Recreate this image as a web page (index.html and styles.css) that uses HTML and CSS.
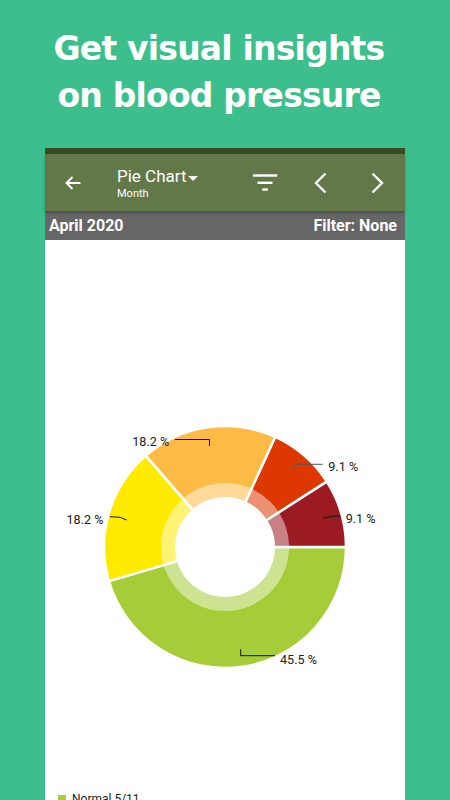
FILE: index.html
```html
<!DOCTYPE html>
<html lang="en">
<head>
  <meta charset="UTF-8">
  <meta name="viewport" content="width=device-width, initial-scale=1.0">
  <link rel="stylesheet" href="styles.css">
</head>
<body>
  <h1 class="headline">Get visual insights<br>on blood pressure</h1>

  <div class="phone">
    <div class="status-bar"></div>

    <div class="toolbar">
      <span class="icon back-icon">
        <svg width="24" height="24" viewBox="0 0 24 24"><path d="M19.5 12H5.5M11.5 6 5.5 12l6 6" fill="none" stroke="#fff" stroke-width="2"/></svg>
      </span>
      <div class="title-block">
        <div class="title">Pie Chart<svg class="caret" width="10" height="5" viewBox="0 0 10 5"><path d="M0 0h10L5 5z" fill="#fff"/></svg></div>
        <div class="subtitle">Month</div>
      </div>
      <div class="toolbar-actions">
        <span class="icon filter-icon">
          <svg width="26" height="24" viewBox="0 0 26 24"><g fill="#fff"><rect x="0.9" y="3.3" width="24.3" height="2.4"/><rect x="5.5" y="10.6" width="15" height="2.4"/><rect x="10.2" y="17.3" width="5.7" height="2.4"/></g></svg>
        </span>
        <span class="icon">
          <svg width="24" height="24" viewBox="0 0 24 24"><path d="M16.5 2.5 7 12l9.5 9.5" fill="none" stroke="#fff" stroke-width="2.4"/></svg>
        </span>
        <span class="icon">
          <svg width="24" height="24" viewBox="0 0 24 24"><path d="M7.5 2.5 17 12l-9.5 9.5" fill="none" stroke="#fff" stroke-width="2.4"/></svg>
        </span>
      </div>
    </div>

    <div class="period-bar">
      <span>April 2020</span>
      <span>Filter: None</span>
    </div>

    <div class="chart-area">
      <svg class="pie" width="360" height="550" viewBox="0 0 360 550">
        <g stroke="#fff" stroke-width="2.5" stroke-linejoin="round">
          <path d="M180 307L301 307A121 121 0 0 1 63.9 341.1Z" fill="#a6cd38"/>
          <path d="M180 307L63.9 341.1A121 121 0 0 1 100.8 215.6Z" fill="#ffea00"/>
          <path d="M180 307L100.8 215.6A121 121 0 0 1 230.3 196.9Z" fill="#fdba45"/>
          <path d="M180 307L230.3 196.9A121 121 0 0 1 281.8 241.6Z" fill="#dc3800"/>
          <path d="M180 307L281.8 241.6A121 121 0 0 1 301 307Z" fill="#9c1b22"/>
        </g>
        <circle cx="180" cy="307" r="64" fill="#fff" fill-opacity="0.45"/>
        <circle cx="180" cy="307" r="50" fill="#fff"/>

        <g fill="none" stroke="#111" stroke-width="1">
          <path d="M130 199.5H164.5V206"/>
          <path d="M246.7 229.3 251 224.3H277.7" stroke="#555"/>
          <path d="M278.3 278.3Q286 275.5 295 276"/>
          <path d="M65 276.7 75 277.3 81.7 280"/>
          <path d="M195.7 409.3V415.7H230"/>
        </g>
        <g class="pie-label">
          <text x="87.3" y="206">18.2 %</text>
          <text x="283.3" y="230.7">9.1 %</text>
          <text x="300.7" y="283.3">9.1 %</text>
          <text x="21.5" y="284.3">18.2 %</text>
          <text x="235" y="424.3">45.5 %</text>
        </g>
      </svg>
      <div class="legend">
        <span class="legend-swatch"></span>
        <span>Normal 5/11</span>
      </div>
    </div>
  </div>
</body>
</html>
```

FILE: styles.css
```css
* {
  box-sizing: border-box;
}

body {
  margin: 0;
  width: 450px;
  height: 800px;
  overflow: hidden;
  background: #3dbf8d;
  font-family: Roboto, "Liberation Sans", sans-serif;
}

/* promo headline */
.headline {
  margin: 0;
  padding: 25px 12px 0 0;
  font-family: "DejaVu Sans", Verdana, sans-serif;
  font-weight: bold;
  font-size: 33px;
  line-height: 47px;
  letter-spacing: -0.8px;
  color: #fff;
  text-align: center;
}

/* phone screen */
.phone {
  margin: 29px 45px 0;
  background: #fff;
}

.status-bar {
  height: 6px;
  background: #3a4b23;
}

.toolbar {
  position: relative;
  z-index: 1;
  display: flex;
  align-items: center;
  height: 57px;
  padding: 0 16px;
  background: #627849;
  box-shadow: 0 2px 3px rgba(0,0,0,0.25);
  color: #fff;
}

.icon {
  display: flex;
  align-items: center;
  justify-content: center;
  width: 24px;
  height: 24px;
  flex-shrink: 0;
}

.back-icon {
  margin-right: 32px;
}

.title-block {
  flex: 1;
  padding-top: 1px;
}

.title {
  font-size: 17px;
  line-height: 20px;
}

.caret {
  margin-left: 1px;
  vertical-align: 1px;
}

.subtitle {
  margin-top: 1px;
  font-size: 11px;
  line-height: 14px;
}

.toolbar-actions {
  display: flex;
  align-items: center;
  gap: 32px;
}

.filter-icon svg {
  margin: 0 -1px;
}

/* date / filter row */
.period-bar {
  display: flex;
  justify-content: space-between;
  height: 29px;
  padding: 1px 8px 0 4px;
  background: #666;
  color: #fff;
  font-size: 16px;
  font-weight: bold;
  line-height: 28px;
}

/* chart */
.chart-area {
  background: #fff;
}

.pie {
  display: block;
}

.pie-label {
  font-family: Roboto, sans-serif;
  font-size: 12.6px;
  fill: #222;
}

.legend {
  display: flex;
  align-items: center;
  gap: 6px;
  padding: 2px 0 0 13px;
  font-size: 12px;
  line-height: 14px;
  color: #222;
}

.legend-swatch {
  width: 8px;
  height: 8px;
  background: #a6cd38;
}
```
